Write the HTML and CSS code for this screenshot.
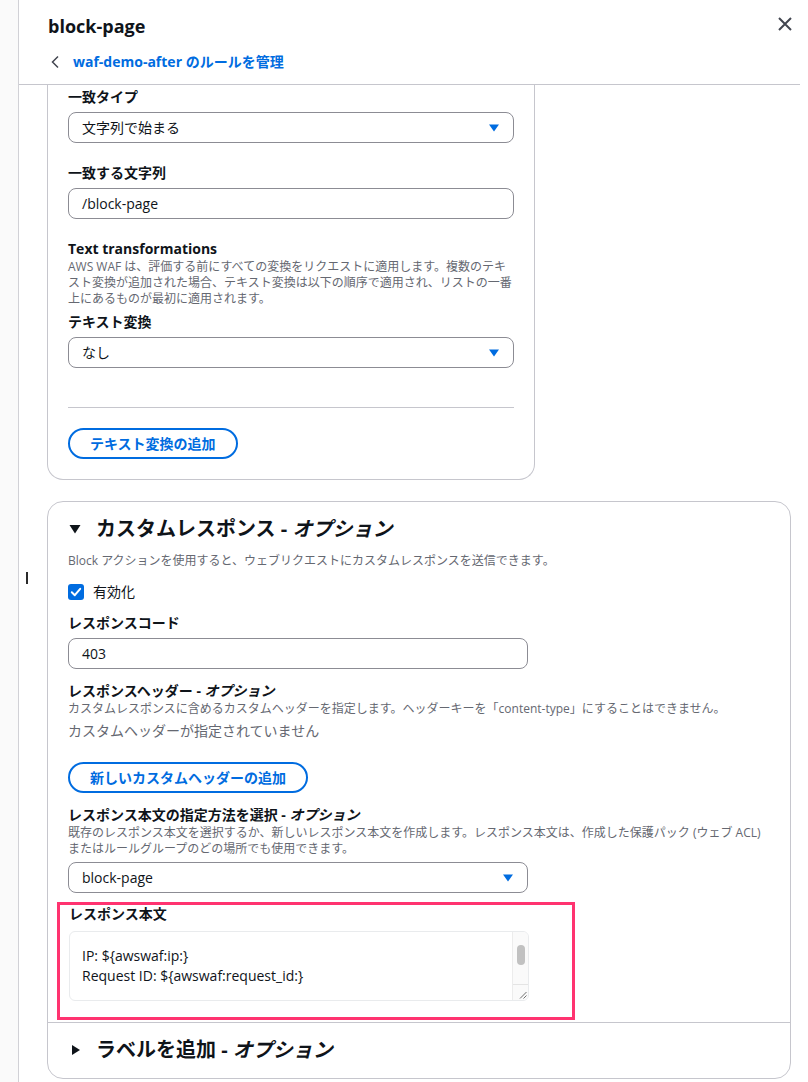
FILE: index.html
```html
<!DOCTYPE html>
<html lang="ja">
<head>
<meta charset="utf-8">
<title>block-page</title>
<link rel="stylesheet" href="styles.css">
</head>
<body>
<div class="app">
  <div class="rail"></div>
  <span class="cursor-mark"></span>
  <section class="panel">
    <header class="panel-header">
      <div class="title-row">
        <h1 class="title">block-page</h1>
        <span class="close" aria-label="閉じる">
          <svg width="14" height="14" viewBox="0 0 14 14"><path d="M1 1 L13 13 M13 1 L1 13" stroke="#424650" stroke-width="2" fill="none"/></svg>
        </span>
      </div>
      <a class="back" href="#">
        <svg class="chev" width="16" height="16" viewBox="0 0 16 16"><path d="M9 2.5 L3.5 8 L9 13.5" stroke="#424650" stroke-width="1.5" fill="none"/></svg>
        <span>waf-demo-after のルールを管理</span>
      </a>
    </header>

    <div class="panel-body">
      <div class="card card-cut">
        <div class="field">
          <div class="label">一致タイプ</div>
          <div class="control select">
            <span>文字列で始まる</span>
            <svg class="caret" width="10" height="8" viewBox="0 0 10 8"><path d="M0 0.5 H10 L5 7.5 Z" fill="#006ce0"/></svg>
          </div>
        </div>
        <div class="field gap20">
          <div class="label">一致する文字列</div>
          <div class="control"><span>/block-page</span></div>
        </div>
        <div class="field gap20">
          <div class="label">Text transformations</div>
          <div class="desc">AWS WAF は、評価する前にすべての変換をリクエストに適用します。複数のテキスト変換が追加された場合、テキスト変換は以下の順序で適用され、リストの一番上にあるものが最初に適用されます。</div>
          <div class="label gap5">テキスト変換</div>
          <div class="control select">
            <span>なし</span>
            <svg class="caret" width="10" height="8" viewBox="0 0 10 8"><path d="M0 0.5 H10 L5 7.5 Z" fill="#006ce0"/></svg>
          </div>
        </div>
        <hr class="divider">
        <button class="btn">テキスト変換の追加</button>
      </div>

      <div class="card card-wide">
        <div class="section">
          <h2 class="sec-head">
            <svg class="tri" width="12" height="12" viewBox="0 0 12 12"><path d="M0.5 2 H11.5 L6 10.5 Z" fill="#0f141a"/></svg>
            <span>カスタムレスポンス - <i>オプション</i></span>
          </h2>
          <div class="desc sec-desc">Block アクションを使用すると、ウェブリクエストにカスタムレスポンスを送信できます。</div>
          <label class="check-row">
            <svg width="16" height="16" viewBox="0 0 16 16"><rect x="0" y="0" width="16" height="16" rx="3" fill="#006ce0"/><path d="M3.8 8.3 L6.8 11.2 L12.2 4.8" stroke="#fff" stroke-width="2" fill="none" stroke-linecap="round" stroke-linejoin="round"/></svg>
            <span>有効化</span>
          </label>
          <div class="field gap10">
            <div class="label">レスポンスコード</div>
            <div class="control narrow"><span>403</span></div>
          </div>
          <div class="field gap12">
            <div class="label">レスポンスヘッダー - <i>オプション</i></div>
            <div class="desc">カスタムレスポンスに含めるカスタムヘッダーを指定します。ヘッダーキーを「content-type」にすることはできません。</div>
            <div class="empty">カスタムヘッダーが指定されていません</div>
            <button class="btn btn-gap">新しいカスタムヘッダーの追加</button>
          </div>
          <div class="field gap12">
            <div class="label">レスポンス本文の指定方法を選択 - <i>オプション</i></div>
            <div class="desc">既存のレスポンス本文を選択するか、新しいレスポンス本文を作成します。レスポンス本文は、作成した保護パック (ウェブ ACL) またはルールグループのどの場所でも使用できます。</div>
            <div class="control select narrow">
              <span>block-page</span>
              <svg class="caret" width="10" height="8" viewBox="0 0 10 8"><path d="M0 0.5 H10 L5 7.5 Z" fill="#006ce0"/></svg>
            </div>
          </div>
          <div class="highlight">
            <div class="label body-label">レスポンス本文</div>
            <div class="textarea">
              <div class="ta-text">
                <div>IP: ${awswaf:ip:}</div>
                <div>Request ID: ${awswaf:request_id:}</div>
              </div>
              <div class="ta-scroll">
                <div class="thumb"></div>
                <div class="resizer">
                  <svg width="14" height="14" viewBox="0 0 14 14"><path d="M12.5 6 L6 12.5 M12.5 9.5 L9.5 12.5" stroke="#6f6f6f" stroke-width="1" fill="none"/></svg>
                </div>
              </div>
            </div>
          </div>
        </div>
        <div class="section section-collapsed">
          <h2 class="sec-head">
            <svg class="tri" width="12" height="12" viewBox="0 0 12 12"><path d="M3 1 L11 6 L3 11 Z" fill="#0f141a"/></svg>
            <span>ラベルを追加 - <i>オプション</i></span>
          </h2>
        </div>
      </div>
    </div>
  </section>
</div>
</body>
</html>
```

FILE: styles.css
```css
html, body {
  margin: 0;
  padding: 0;
  background: #ffffff;
}

body {
  font-family: "Open Sans", "Noto Sans CJK JP", sans-serif;
  color: #0f141a;
  font-size: 14px;
}

.app {
  position: relative;
  display: flex;
  height: 1082px;
  overflow: hidden;
}

.rail {
  flex: none;
  width: 18px;
  background: #fafafa;
  border-right: 1px solid #d1d1d6;
}

.cursor-mark {
  position: absolute;
  left: 26px;
  top: 572px;
  width: 2px;
  height: 12px;
  background: #2b2b2b;
}

.panel {
  flex: none;
  width: 781px;
  display: flex;
  flex-direction: column;
}

/* header */
.panel-header {
  padding: 14px 8px 12px 29px;
  border-bottom: 1px solid #c6c6cd;
}

.title-row {
  display: flex;
  justify-content: space-between;
  align-items: center;
  height: 24px;
}

.title {
  margin: 0;
  font-size: 18px;
  line-height: 24px;
  font-weight: 700;
  color: #0f141a;
}

.close {
  display: flex;
  width: 14px;
  height: 14px;
  margin-top: -4px;
}

.back {
  display: flex;
  align-items: center;
  height: 20px;
  margin-top: 14px;
  color: #006ce0;
  font-size: 14px;
  font-weight: 700;
  line-height: 20px;
  text-decoration: none;
}

.chev {
  margin-left: 1px;
  margin-right: 8px;
}

/* body */
.panel-body {
  flex: 1;
  overflow: hidden;
  padding: 0 9px 0 28px;
}

.card {
  box-sizing: border-box;
  border: 1px solid #c6c6cd;
  border-radius: 16px;
  background: #fff;
}

.card-cut {
  width: 488px;
  border-top: none;
  border-radius: 0 0 16px 16px;
  padding: 2px 20px 20px;
}

.card-wide {
  width: 744px;
  margin-top: 21px;
  padding: 0;
}

.field.gap20 { margin-top: 20px; }
.field.gap12 { margin-top: 12px; }
.field.gap10 { margin-top: 10px; }

.label {
  font-size: 14px;
  line-height: 20px;
  font-weight: 700;
  color: #0f141a;
}

.label.gap5 { margin-top: 5px; }

.desc {
  font-size: 12px;
  line-height: 16px;
  color: #656871;
}

.control {
  box-sizing: border-box;
  height: 31px;
  margin-top: 5px;
  border: 1px solid #8c8c94;
  border-radius: 8px;
  padding: 0 14px 0 13px;
  display: flex;
  align-items: center;
  justify-content: space-between;
  font-size: 14px;
  line-height: 20px;
  color: #0f141a;
  background: #fff;
}

.control.narrow {
  width: 460px;
}

.caret {
  flex: none;
}

.divider {
  margin: 39px 0 0;
  border: none;
  border-top: 1px solid #c6c6cd;
  height: 0;
}

.btn {
  display: block;
  box-sizing: border-box;
  height: 31px;
  margin-top: 20px;
  padding: 0 20px;
  border: 2px solid #006ce0;
  border-radius: 20px;
  background: #fff;
  color: #006ce0;
  font-family: inherit;
  font-size: 14px;
  font-weight: 700;
  line-height: 27px;
}

.btn.btn-gap {
  margin-top: 21px;
}

/* sections in wide card */
.section {
  padding: 13px 20px 0;
}

.sec-head {
  display: flex;
  align-items: center;
  margin: 0;
  height: 28px;
  font-size: 20px;
  line-height: 28px;
  font-weight: 700;
  color: #0f141a;
}

.tri {
  flex: none;
  margin-left: 1px;
  margin-right: 15px;
}

.sec-desc {
  margin-top: 10px;
}

.check-row {
  display: flex;
  align-items: center;
  height: 22px;
  margin-top: 12px;
  font-size: 14px;
  line-height: 22px;
}

.check-row svg {
  flex: none;
  margin-right: 9px;
}

.empty {
  margin-top: 4px;
  font-size: 14px;
  line-height: 20px;
  color: #656871;
}

.highlight {
  width: 518px;
  box-sizing: border-box;
  margin: 9px 0 0 -11px;
  padding: 0 9px 16px 9px;
  border: 3px solid #ff3370;
}

.body-label {
  line-height: 18px;
}

.textarea {
  display: flex;
  box-sizing: border-box;
  width: 460px;
  height: 70px;
  margin-top: 8px;
  border: 1px solid #e9ebed;
  border-radius: 6px;
  overflow: hidden;
  background: #fff;
}

.ta-text {
  flex: 1;
  padding: 14px 12px 0 12px;
  font-size: 14px;
  line-height: 20px;
  color: #0f141a;
}

.ta-scroll {
  flex: none;
  width: 15px;
  background: #fafafa;
  border-left: 1px solid #ececec;
  display: flex;
  flex-direction: column;
  align-items: center;
}

.thumb {
  width: 8px;
  height: 20px;
  margin-top: 13px;
  border-radius: 4px;
  background: #c1c1c1;
}

.resizer {
  margin-top: auto;
  width: 100%;
  height: 15px;
  border-top: 1px solid #e4e4e4;
  display: flex;
  justify-content: flex-end;
  align-items: flex-end;
}

.section-collapsed {
  margin-top: 2px;
  border-top: 1px solid #c6c6cd;
  padding: 13px 20px 14px;
}
```
